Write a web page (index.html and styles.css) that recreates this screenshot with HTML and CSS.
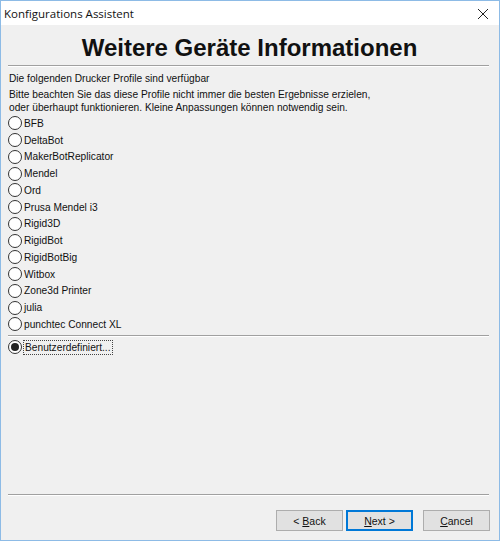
FILE: index.html
```html
<!DOCTYPE html>
<html lang="de">
  <head>
    <meta charset="UTF-8" />
    <title>Konfigurations Assistent</title>
    <link rel="stylesheet" href="styles.css">
  </head>
  <body>
    <div class="fenster">
      <div class="titel">
        <span>Konfigurations Assistent</span>
        <svg class="schliessen" width="12" height="12" viewBox="0 0 12 12">
          <path d="M1 1 L11 11 M11 1 L1 11" stroke="#222" stroke-width="1" fill="none" />
        </svg>
      </div>
      <div class="seite">
        <h1>Weitere Geräte Informationen</h1>
        <div class="linie"></div>
        <p class="info">Die folgenden Drucker Profile sind verfügbar</p>
        <p class="hinweis">Bitte beachten Sie das diese Profile nicht immer die besten Ergebnisse erzielen,<br>oder überhaupt funktionieren. Kleine Anpassungen können notwendig sein.</p>
        <ul class="profile">
          <li><span class="radio"></span>BFB</li>
          <li><span class="radio"></span>DeltaBot</li>
          <li><span class="radio"></span>MakerBotReplicator</li>
          <li><span class="radio"></span>Mendel</li>
          <li><span class="radio"></span>Ord</li>
          <li><span class="radio"></span>Prusa Mendel i3</li>
          <li><span class="radio"></span>Rigid3D</li>
          <li><span class="radio"></span>RigidBot</li>
          <li><span class="radio"></span>RigidBotBig</li>
          <li><span class="radio"></span>Witbox</li>
          <li><span class="radio"></span>Zone3d Printer</li>
          <li><span class="radio"></span>julia</li>
          <li><span class="radio"></span>punchtec Connect XL</li>
        </ul>
        <div class="linie klein"></div>
        <div class="eigen"><span class="radio valgt"></span><span class="fokus">Benutzerdefiniert...</span></div>
        <div class="linie unten"></div>
        <div class="knapper">
          <button>&lt; <u>B</u>ack</button>
          <button class="naeste"><u>N</u>ext &gt;</button>
          <button class="afbryd"><u>C</u>ancel</button>
        </div>
      </div>
    </div>
  </body>
</html>
```

FILE: styles.css
```css
body {
  margin: 0;
  background-color: #f0f0f0;
}
.fenster {
  width: 500px;
  height: 541px;
  box-sizing: border-box;
  border: 1px solid #8dbbe6;
  display: flex;
  flex-direction: column;
}
.titel {
  height: 24px;
  background-color: white;
  display: flex;
  align-items: center;
  justify-content: space-between;
  padding: 0 10px 0 3px;
  font-family: "Open Sans", sans-serif;
  font-size: 11.5px;
  color: #111;
}
.schliessen {
  margin-top: 1px;
}
.seite {
  flex: 1;
  background-color: #f0f0f0;
  padding: 0 8px 9px 7px;
  display: flex;
  flex-direction: column;
  font-family: "Liberation Sans", sans-serif;
  font-size: 10.2px;
  color: #111;
}
h1 {
  margin: 10px 0 0;
  text-align: center;
  font-family: "Liberation Sans", sans-serif;
  font-weight: bold;
  font-size: 24px;
  line-height: 26px;
  color: #111;
}
.linie {
  border-top: 1px solid #a0a0a0;
  border-bottom: 1px solid #fff;
  margin-top: 4px;
  margin-right: 2px;
}
.info {
  margin: 5px 0 0 1px;
  line-height: 13px;
}
.hinweis {
  margin: 3px 0 0 1px;
  line-height: 13px;
}
.profile {
  list-style: none;
  margin: 1px 0 0;
  padding: 0;
}
.profile li,
.eigen {
  height: 16.75px;
  display: flex;
  align-items: center;
  gap: 2px;
}
.radio {
  width: 12px;
  height: 12px;
  border: 1px solid #333;
  border-radius: 50%;
  background-color: white;
  display: inline-flex;
  align-items: center;
  justify-content: center;
  flex-shrink: 0;
}
.valgt::after {
  content: "";
  width: 8px;
  height: 8px;
  border-radius: 50%;
  background-color: #222;
}
.klein {
  margin-top: 2px;
}
.eigen {
  margin-top: 2px;
}
.fokus {
  outline: 1px dotted #444;
  line-height: 13px;
  padding: 0 1px;
}
.unten {
  margin-top: auto;
}
.knapper {
  display: flex;
  justify-content: flex-end;
  gap: 3px;
  margin-top: 14px;
  padding-right: 1px;
}
button {
  width: 67px;
  height: 21px;
  background-color: #e1e1e1;
  border: 1px solid #adadad;
  font-family: "Liberation Sans", sans-serif;
  font-size: 10.5px;
  color: #111;
  padding: 0;
}
.naeste {
  border: 2px solid #0078d7;
}
.afbryd {
  margin-left: 7px;
}
```
